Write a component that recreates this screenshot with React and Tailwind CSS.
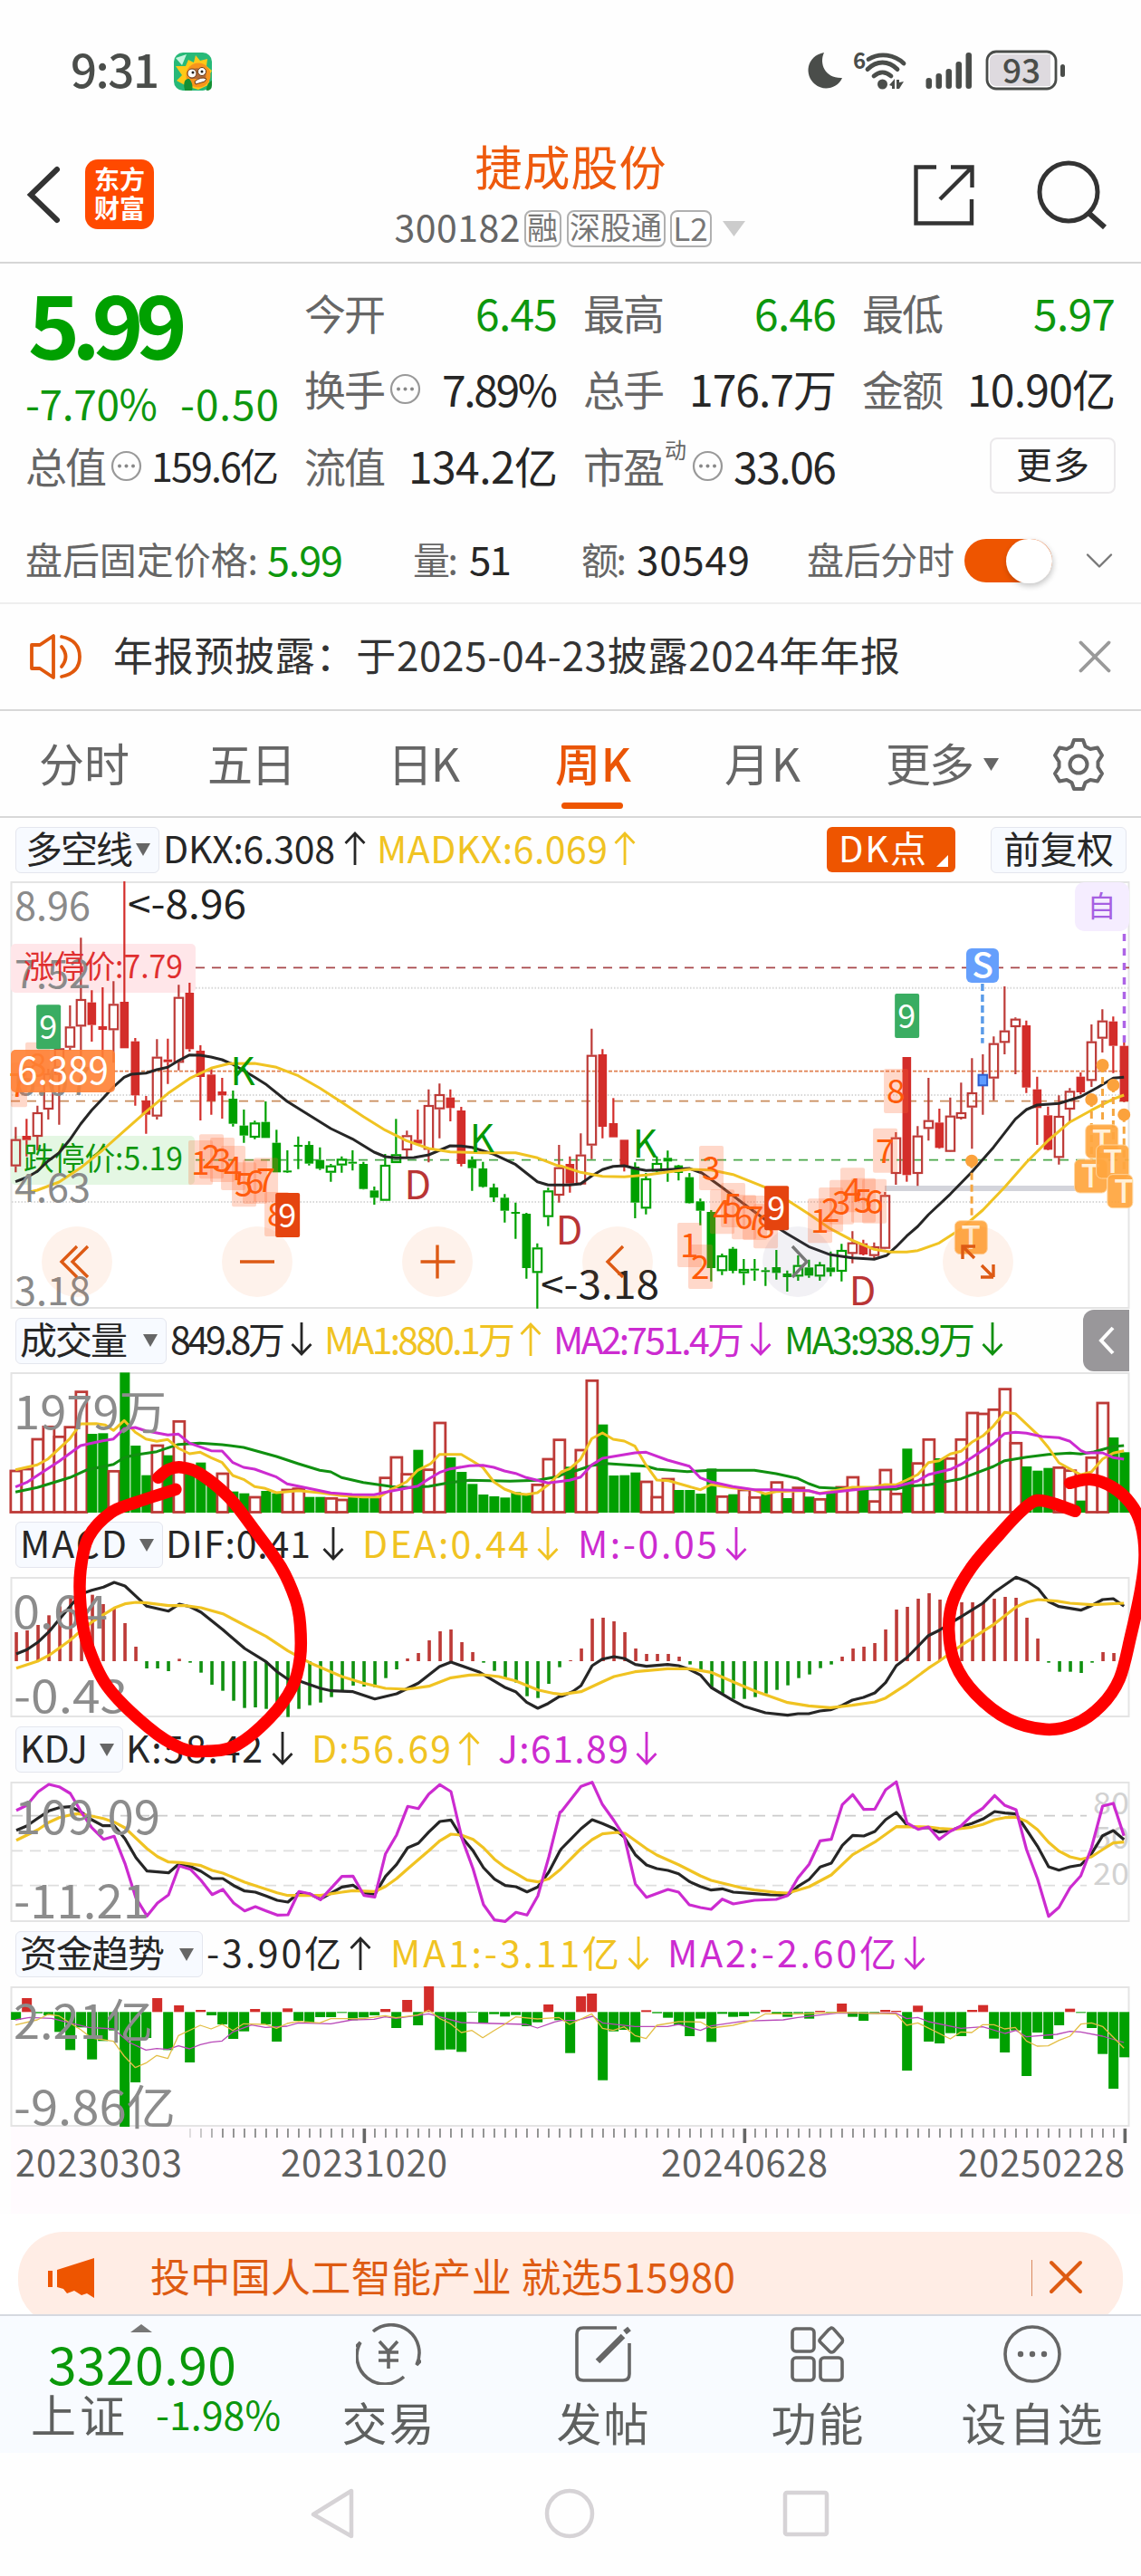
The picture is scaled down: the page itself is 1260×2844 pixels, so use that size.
import React, { useLayoutEffect, useRef } from "react";
import { ChevronDown, X } from "lucide-react";

/* Text set to an exact advance width by adjusting its tracking. */
function Fit({ w, className = "", children }) {
  const ref = useRef(null);
  useLayoutEffect(() => {
    const el = ref.current;
    el.style.letterSpacing = "0px";
    const natural = el.getBoundingClientRect().width;
    const n = Array.from(el.textContent).length;
    el.style.letterSpacing = `${(w - natural) / Math.max(1, n - 1)}px`;
  }, [w]);
  return (
    <span className={`inline-block shrink-0 whitespace-pre pb-[6px] ${className}`} style={{ width: w }}>
      <span ref={ref} className="inline-block">{children}</span>
    </span>
  );
}

/* ---------- chart helpers ---------- */
const RIGHT = 1519;
const px = (x) => x / 2.45;
const col = (i) => (42.5 + 29.4 * i) / 2.45;

function parse(str, dx = 0) {
  return str.trim().split(/\s+/).map((p) => {
    const [x, y] = p.split(",").map(Number);
    return [x + dx, y];
  });
}
function trace(left, right, y0) {
  return [...parse(left), ...parse(right, RIGHT)].map(([x, y]) => `${px(x).toFixed(1)},${(y0 + y / 3).toFixed(1)}`).join(" ");
}
function Line({ l, r, y0, color, width = 3.4 }) {
  return <polyline points={trace(l, r, y0)} fill="none" stroke={color} strokeWidth={width} strokeLinejoin="round" />;
}
function smooth(str, dx, y0) {
  const p = parse(str, dx).map(([x, y]) => [px(x), y0 + y / 3]);
  let d = `M${p[0][0]} ${p[0][1]}`;
  for (let i = 0; i < p.length - 1; i++) {
    const a = p[i - 1] || p[i], b = p[i], c = p[i + 1], e = p[i + 2] || c;
    d += ` C${b[0] + (c[0] - a[0]) / 6} ${b[1] + (c[1] - a[1]) / 6} ${c[0] - (e[0] - b[0]) / 6} ${c[1] - (e[1] - b[1]) / 6} ${c[0]} ${c[1]}`;
  }
  return d;
}
const INK = "#262626", GOLD = "#f0c322", MAG = "#cc2bd0", GRN = "#109010", RED = "#bd3a37";

function T({ x, y, w, size, fill, children, ...rest }) {
  return (
    <text x={x} y={y} fontSize={size} fill={fill} textLength={w} lengthAdjust="spacingAndGlyphs" {...rest}>{children}</text>
  );
}
function Panel({ top, height, children }) {
  return (
    <svg width="1260" height={height} viewBox={`0 ${top} 1260 ${height}`} className="block overflow-visible">
      <rect x="12.5" y={top + 1} width="1234" height={height - 2} fill="#fff" stroke="#e4e4e4" strokeWidth="2" />
      {children}
    </svg>
  );
}

/* ---------- price ---------- */
const CANDLES = `R853,893,983,1003 F826,882,896,950 R782,804,885,930 R660,675,795,828 R590,592,680,845 R450,520,590,600 R226,429,520,640 F400,440,515,570 F390,519,531,640 R370,445,532,640 F39,438,592,592
F558,569,748,782 F750,765,812,875 R562,620,818,828 F560,629,638,710 R382,422,640,665 F375,408,595,603 F582,600,687,831 F660,679,767,812 F690,735,748,825 g732,759,842,851
g795,848,881,905 h832,838,888,893 g768,836,889,889 g862,905,1003,1003 g930,997,1003,1005 g884,912,918,992 g900,912,974,980 g920,962,991,995 h975,980,1004,1034 h950,958,980,1004
g930,968,974,997 g968,975,1058,1060 g1050,1063,1087,1110 h942,978,1097,1097 h826,943,972,972 R865,880,930,958 F795,895,908,912 R728,780,928,970 R709,744,794,890 F728,755,790,834
F786,798,975,983 g950,961,989,1064 g968,990,1051,1054 g1040,1053,1086,1101 g1075,1087,1130,1169 g1103,1134,1140,1223 g1137,1140,1320,1355 h1238,1252,1336,1454 h1054,1063,1151,1181 R912,986,1080,1103
F950,975,1040,1070 R874,944,1043,1045 R527,614,914,959 F595,612,852,890 F757,840,887,887 F895,895,985,1000 g970,984,1103,1155 h1005,1023,1123,1142 h950,972,1000,1003 g931,955,967,1034
g978,980,1005,1030 g1005,1019,1105,1106 g1090,1099,1130,1178 g1128,1134,1320,1364 h1272,1278,1330,1343 g1250,1256,1329,1337 h1290,1323,1337,1376 g1290,1322,1328,1362 g1318,1327,1333,1379 g1260,1317,1336,1358
g1328,1338,1350,1398 h1278,1310,1348,1362 g1292,1318,1345,1352 h1300,1308,1348,1362 g1265,1318,1333,1348 h1240,1260,1332,1364 R1198,1235,1273,1304 F1226,1238,1275,1278 R1235,1248,1280,1290 R1068,1078,1256,1258
R870,887,1008,1044 F621,621,1012,1034 R850,881,1008,1048 R690,830,859,898 F792,838,922,925 R755,815,935,936 R706,804,825,828 R625,738,788,925 B612,680,715,812 R553,575,692,764
R387,533,574,612 R490,494,522,678 F500,516,722,740 F686,728,790,912 F785,814,928,930 R748,816,955,977 R724,733,795,834 F672,686,738,745 R513,569,700,720 R463,500,560,606
F487,503,584,674 F570,584,768,770`.trim().split(/\s+/).map((s) => ({ t: s[0], v: s.slice(1).split(",").map(Number) }));

function Candle({ i, t, v }) {
  const x = col(i), [h, a, b, l] = v.map((n) => 960 + n / 3);
  const up = t === "R" || t === "h";
  const c = t === "g" || t === "h" ? "#00a000" : t === "B" ? "#2f5fd0" : up ? RED : "#d32d2a";
  const wick = t === "B" ? RED : c;
  return (
    <g>
      <path d={`M${x} ${h}V${a}M${x} ${b}V${l}`} stroke={wick} strokeWidth="2.2" />
      {up ? (
        <rect x={x - 4.6} y={a + 1} width="9.4" height={Math.max(1, b - a - 2)} fill="none" stroke={c} strokeWidth="2.2" />
      ) : (
        <rect x={x - 4.8} y={a} width="9.600" height={Math.max(2, b - a)} fill={t === "B" ? "#5e9bff" : c} stroke={t === "B" ? c : "none"} strokeWidth="2" />
      )}
    </g>
  );
}

const COUNTS = [
  ["7", 1, 640], ["8", 2, 572], ["1", 17, 897], ["2", 18, 877], ["3", 19, 888], ["4", 20, 915], ["5", 21, 970], ["6", 22, 960], ["7", 23, 955], ["8", 24, 1068],
  ["1", 62, 1170], ["2", 63, 1242], ["3", 64, 915], ["4", 65, 1060], ["5", 66, 1038], ["6", 67, 1078], ["7", 68, 1080], ["8", 69, 1108],
  ["1", 74, 1090], ["2", 75, 1053], ["3", 76, 1028], ["4", 77, 988], ["5", 78, 1022], ["6", 79, 1025], ["7", 80, 857], ["8", 81, 660],
];
const NINES = [[3, 448, "#3aad62"], [25, 1071, "#e5440f"], [70, 1048, "#e5440f"], [82, 411, "#3aad62"]];
const TRADES = [[1064, 1163], [1418, 845], [1388, 960], [1447, 912], [1477, 1010]];
const DOTS = [[1110, 965, 1160], [1464, 648, 840], [1493, 714, 910], [1434, 762, 960], [1522, 812, 1008]];

function PriceChart() {
  const Y = (y) => 960 + y / 3;
  return (
    <Panel top={973} height={472}>
      {[392, 747, 1101].map((y) => <path key={y} d={`M13 ${Y(y)}H1247`} stroke="#d8d8d8" strokeWidth="2" strokeDasharray="1.5 2" />)}
      <path d={`M216 ${Y(325)}H1247`} stroke="#a8474a" strokeWidth="1.6" strokeDasharray="10 8" />
      <path d={`M126 ${Y(668)}H1247`} stroke="#e08050" strokeWidth="1.6" strokeDasharray="4 2" />
      <path d={`M12 ${Y(767)}H1247`} stroke="#c98d5c" strokeWidth="1.6" strokeDasharray="10 8" />
      <path d={`M216 ${Y(962)}H1247`} stroke="#4aa84a" strokeWidth="1.6" strokeDasharray="10 8" />
      <rect x="977" y="1309" width="212" height="6" fill="#d3d4db" />
      <rect x="12" y="1042" width="204" height="54" rx="5" fill="#ffe6e9" />
      <rect x="12" y="1254" width="203" height="54" rx="5" fill="#e4f7e3" />
      {CANDLES.map((c, i) => <Candle key={i} i={i} {...c} />)}
      <T x={16} y={1091} w={84} size={44} fill="#8a8a8a">7.52</T>
      <T x={16} y={1209} w={84} size={44} fill="#8a8a8a">6.07</T>
      <T x={26} y={1080} w={176} size={35} fill="#e02f2f">涨停价:7.79</T>
      <T x={26} y={1292} w={176} size={35} fill="#0f970f">跌停价:5.19</T>
      <Line y0={960} color={INK}
        l="42,1034 72,1020 101,1000 130,965 160,938 189,895 218,843 248,797 277,760 307,720 336,688 355,678 395,674 424,663 454,655 483,633 513,614 542,615 571,621 601,630 630,645 659,666 689,688 718,710 777,768 836,813 895,858 953,892 1012,936 1042,951 1071,955 1120,954 1160,945 1189,930 1218,915 1248,916 1277,920 1336,943 1395,977 1454,1034 1483,1045 1540,1045"
        r="52,1041 82,1015 111,994 140,983 170,981 199,990 229,997 287,994 346,990 380,1005 434,1052 493,1107 552,1160 610,1206 669,1249 728,1276 787,1286 846,1291 880,1278 905,1250 934,1214 964,1182 993,1143 1052,1075 1110,1002 1169,920 1228,827 1258,795 1287,780 1346,775 1405,752 1450,722 1493,691 1522,688" width={3} />
      <Line y0={960} color={GOLD}
        l="42,1070 72,1070 101,1062 160,1035 218,988 277,930 336,866 395,802 454,742 513,692 571,658 620,643 689,642 748,655 807,683 865,724 924,770 983,818 1042,863 1100,898 1160,924 1218,935 1306,938 1395,938 1454,955 1512,982"
        r="0,982 52,1003 111,1016 170,1018 229,1012 287,1002 346,993 405,995 464,1010 550,1052 610,1094 669,1141 728,1190 787,1228 846,1258 890,1267 934,1267 964,1262 1022,1237 1081,1190 1140,1128 1199,1052 1258,970 1317,897 1376,836 1434,797 1493,760 1522,747" width={3} />
      {COUNTS.map(([n, i, y], k) => {
        const x = k === 0 ? 20 : (42.5 + 29.4 * i) / 2.45;
        return (
          <g key={k}>
            <rect x={k === 0 ? 12 : x - 13.3} y={Y(y)} width={k === 0 ? 18 : 27} height="49" rx="2" fill="#ff6a33" opacity=".26" />
            <text x={x} y={Y(y) + 38} fontSize="37" textAnchor="middle" fill="#ff5a08">{n}</text>
          </g>
        );
      })}
      {NINES.map(([i, y, c]) => (
        <g key={i}>
          <rect x={col(i) - 13.2} y={Y(y)} width="27" height="49" rx="2" fill={c} />
          <text x={col(i)} y={Y(y) + 37.5} fontSize="36" textAnchor="middle" fill="#fff">9</text>
        </g>
      ))}
      {[[657, 715], [1304, 937], [1745, 953]].map(([x, y]) => <text key={x} x={px(x)} y={Y(y)} fontSize="42" textAnchor="middle" fill="#069806">K</text>)}
      {[[1130, 1092], [1540, 1242], [2334, 1443]].map(([x, y]) => <text key={x} x={px(x)} y={Y(y)} fontSize="43" textAnchor="middle" fill="#b93535">D</text>)}
      <T x={16} y={1016} w={84} size={44} fill="#8a8a8a">8.96</T>
      <T x={16} y={1327} w={84} size={44} fill="#8a8a8a">4.63</T>
      <T x={16} y={1441} w={84} size={44} fill="#8a8a8a">3.18</T>
      <T x={141} y={1014} w={131} size={43} fill="#222">&lt;-8.96</T>
      <T x={597} y={1434} w={131} size={43} fill="#222">&lt;-3.18</T>
      <rect x="12" y="1159" width="115" height="47" rx="5" fill="#ff8134" opacity=".9" />
      <T x={19} y={1197} w={101} size={42} fill="#fff">6.389</T>

      <path d={`M${px(RIGHT + 1139)} ${Y(378)}V${Y(575)}`} stroke="#5a9be8" strokeWidth="3.5" strokeDasharray="8 4" />
      <rect x="1067" y="1047" width="36" height="38" rx="6" fill="#659ffc" />
      <text x="1085" y="1080" fontSize="39" fontWeight="500" textAnchor="middle" fill="#fff">S</text>
      <path d={`M1241.5 ${Y(213)}V${Y(575)}`} stroke="#ad64e6" strokeWidth="3.5" strokeDasharray="8 8" />
      <rect x="1187" y="974" width="60" height="54" rx="10" fill="#f5edff" />
      <text x="1216.500" y="1012" fontSize="32" textAnchor="middle" fill="#a65fe2">自</text>
      {DOTS.map(([x, y, e]) => (
        <g key={x} stroke="#f5a640" fill="#fba23c">
          <path d={`M${px(RIGHT + x)} ${Y(y)}V${Y(e)}`} strokeWidth="3" strokeDasharray="8 5" />
          <circle cx={px(RIGHT + x)} cy={Y(y)} r="7" stroke="none" />
        </g>
      ))}
      {TRADES.map(([x, y], i) => (
        <g key={x}>
          <rect x={px(RIGHT + x)} y={Y(y)} width={i === 4 ? 28 : 36} height="37" rx="6" fill="#ffa63f" stroke="#ffd7a0" strokeWidth="1" opacity=".93" />
          <text x={px(RIGHT + x) + 18} y={Y(y) + 31} fontSize="35" fontWeight="500" textAnchor="middle" fill="#fff0d8">T</text>
        </g>
      ))}
      {[85, 284, 483, 682, 881, 1080].map((x, i) => <circle key={x} cx={x} cy="1393" r="39" fill={i === 4 ? "#6b5b8c" : "#f2661c"} opacity=".085" />)}
      <g fill="none" stroke="#dd5a14" strokeWidth="3.4">
        <path d="M85 1376L68 1393L85 1410M97 1376L80 1393L97 1410M265 1393H303M464.500 1393H502.500M483 1374.500V1411.500M688 1376L671 1393L688 1410" />
        <path d="M875 1376L891 1393L875 1410" stroke="#777" />
        <path d="M1063 1390V1376H1077M1063 1376L1076 1389M1097 1410H1083M1097 1410V1396M1097 1410L1084 1397" />
      </g>
    </Panel>
  );
}

/* ---------- volume ---------- */
const VOL = `R549 R543 R444 R403 R436 R404 R287 G429 G427 R550 G226 G468 G566 R465 G500 R385 G560 G524 G598 R558 G620 G626 R636 G618 G626 R612 R608 G638 G638 R640 R645 G638 G640 G636 R572 R504 R560 G482 R545 R390 G507 G555 G595 G630 G636 G640 G622 G630 R595 R510 R446 G538 R480 R250 G398 G567 G566 G557 R585 R636 R576 G615 G615 G627 G544 R634 G629 R612 R637 G628 R587 G642 R605 G637 R643 G618 R603 R570 G610 R650 R546 R625 G478 R524 R445 G510 R508 R445 R357 R360 R346 R278 R457 G537 G551 G542 R538 R548 G650 R505 R324 G441 G490`.split(" ");

function VolumeChart() {
  return (
    <Panel top={1515} height={155}>
      {VOL.map((s, i) => {
        const x = col(i), y = 1440 + Number(s.slice(1)) / 3;
        return s[0] === "R" ? (
          <rect key={i} x={x - 5.5} y={y + 1} width="12" height={1668.5 - y} fill="#fff" stroke={RED} strokeWidth="2.800" />
        ) : (
          <rect key={i} x={x - 5} y={y} width="11" height={1670 - y} fill="#00a000" />
        );
      })}
      <Line y0={1440} color={GRN} width={3}
        l="42,622 101,607 189,574 236,548 307,530 336,508 366,499 424,488 483,464 540,460 601,465 659,474 748,504 807,528 865,550 895,555 924,574 983,590 1060,604 1110,607 1160,603 1218,590 1270,583 1380,586 1454,583 1512,570"
        r="0,565 22,558 82,534 120,527 229,536 258,546 340,554 405,550 522,550 581,561 640,577 669,594 699,607 787,612 905,612 934,603 993,598 1081,578 1169,537 1199,518 1258,506 1317,497 1376,493 1405,496 1440,489 1493,471 1522,468" />
      <Line y0={1440} color={GOLD} width={3}
        l="42,548 101,532 130,512 189,445 218,396 260,395 285,400 307,418 336,385 366,424 395,446 424,454 454,448 483,477 513,495 542,490 571,508 601,524 630,567 659,580 689,604 718,610 748,624 807,617 865,624 924,634 983,638 1026,638 1060,612 1100,588 1130,550 1165,528 1189,497 1248,497 1277,518 1306,540 1336,588 1365,612 1395,626 1424,630 1454,624 1483,598"
        r="0,555 22,545 52,513 82,445 111,426 140,447 170,453 199,470 229,533 258,582 290,584 346,604 376,614 405,597 464,608 522,615 552,628 581,620 640,618 669,618 699,626 728,620 787,606 846,606 875,597 905,598 934,582 964,564 993,524 1022,518 1052,496 1081,487 1110,457 1140,436 1169,403 1199,358 1228,362 1287,430 1317,474 1346,525 1376,545 1405,565 1434,555 1464,512 1493,493 1522,485" />
      <Line y0={1440} color={MAG} width={3}
        l="42,605 72,590 160,520 218,468 277,452 307,446 336,412 366,408 395,419 454,433 483,430 513,460 571,485 601,486 630,524 659,540 689,546 748,572 777,595 836,610 895,625 953,630 1012,631 1060,618 1130,602 1160,578 1189,557 1218,545 1270,535 1306,533 1336,540 1365,552 1395,560 1424,574 1483,592"
        r="22,583 52,572 82,532 111,510 199,492 229,490 287,516 346,536 376,575 405,588 464,604 522,614 581,614 669,617 699,627 787,615 860,607 905,604 964,585 993,564 1052,547 1081,530 1110,508 1169,460 1199,428 1228,424 1258,427 1300,438 1346,442 1376,454 1405,484 1420,492 1464,492 1493,508 1522,513" />
      <T x={15} y={1578} w={169} size={51} fill="#8c8c8c">1979万</T>
    </Panel>
  );
}

/* ---------- MACD ---------- */
const MACD = [1086, 1080, 1062, 1030, 1000, 972, 960, 962, 993, 1005, 1056, 1134, 1206, 1206, 1215, 1174, 1187, 1220, 1260, 1280, 1313, 1337, 1335, 1340, 1345, 1367, 1340, 1328, 1319, 1301, 1280, 1263, 1266, 1268, 1238, 1209, 1173, 1155, 1113, 1083, 1077, 1119, 1152, 1187, 1214, 1238, 1253, 1298, 1304, 1257, 1202, 1179, 1140, 1041, 1038, 1050, 1086, 1140, 1158, 1158, 1158, 1167, 1193, 1217, 1268, 1289, 1307, 1307, 1301, 1289, 1277, 1262, 1238, 1226, 1205, 1193, 1167, 1140, 1134, 1122, 1077, 1011, 1002, 975, 957, 978, 985, 987, 987, 987, 975, 969, 972, 1038, 1107, 1187, 1217, 1217, 1221, 1187, 1152, 1155, 1194];

function MacdChart() {
  return (
    <Panel top={1741} height={155}>
      {MACD.map((v, i) => {
        const a = 1440 + Math.min(v, 1182) / 3, b = 1440 + Math.max(v, 1182) / 3;
        return <rect key={i} x={col(i) - 1.1} y={a} width="3.600" height={b - a} fill={v < 1182 ? RED : GRN} />;
      })}
      <Line y0={1440} color={INK} width={3.2}
        l="44,1158 73,1144 102,1120 132,1085 190,1000 218,960 248,947 280,937 309,921 338,933 368,967 397,1000 456,1016 485,993 515,1002 544,1020 603,1078 662,1140 720,1184 750,1217 779,1242 809,1247 867,1272 897,1280 955,1283 1014,1307 1073,1290 1132,1255 1189,1200 1220,1185 1295,1217 1336,1247 1365,1268 1395,1283 1425,1318 1455,1338 1483,1322 1512,1300"
        r="0,1298 30,1283 53,1263 83,1197 111,1175 142,1167 170,1173 200,1193 230,1199 287,1193 317,1197 346,1209 376,1228 405,1269 464,1312 493,1331 552,1353 612,1361 640,1356 669,1356 699,1347 728,1343 760,1328 787,1311 817,1302 848,1287 877,1253 906,1197 935,1170 993,1097 1022,1080 1060,1050 1081,1035 1140,990 1170,955 1230,904 1260,918 1290,942 1317,984 1346,1001 1405,1013 1434,998 1464,978 1493,975 1522,1000" />
      <Line y0={1440} color={GOLD} width={3.2}
        l="44,1205 102,1182 132,1163 190,1112 218,1082 248,1053 280,1028 309,1006 338,992 368,987 397,989 456,998 500,998 544,1005 603,1025 720,1100 779,1148 838,1187 925,1233 983,1255 1043,1272 1100,1275 1160,1265 1220,1237 1270,1228 1306,1227 1350,1233 1395,1247 1455,1277 1500,1289"
        r="0,1292 53,1283 111,1250 142,1233 199,1217 287,1207 346,1207 405,1219 464,1250 522,1280 612,1319 669,1330 728,1336 787,1328 848,1317 877,1304 935,1258 993,1205 1022,1182 1081,1130 1170,1060 1230,1003 1260,986 1290,978 1340,983 1376,990 1434,995 1522,990" />
      <T x={14} y={1798} w={105} size={50} fill="#8c8c8c">0.64</T>
      <T x={15} y={1891} w={126} size={50} fill="#8c8c8c">-0.43</T>
    </Panel>
  );
}

/* ---------- KDJ ---------- */
function KdjChart() {
  return (
    <Panel top={1967} height={155}>
      {[254, 370, 485].map((y, i) => <path key={y} d={`M13 ${1920 + y / 3}H1200`} stroke={i ? "#dedede" : "#cccccc"} strokeWidth="1.600" strokeDasharray="12 8" />)}
      {[["80", 2002.5], ["50", 2041], ["20", 2081]].map(([n, y]) => <T key={n} x={1207} y={y} w={40} size={33} fill="#d2d2d2">{n}</T>)}
      <Line y0={1920} color={INK} width={3.2}
        l="44,302 72,288 103,262 132,238 160,227 190,224 218,240 248,267 278,287 309,287 338,330 368,393 398,437 456,443 483,415 515,422 544,438 574,462 603,462 632,485 662,503 691,507 720,520 750,534 779,540 809,508 838,513 867,530 925,490 955,484 985,510 1014,514 1043,455 1073,415 1103,360 1132,345 1160,308 1190,273 1220,268 1248,323 1280,370 1308,426 1338,464 1367,485 1396,489 1426,506 1455,490 1485,440 1515,370"
        r="0,363 53,297 83,267 111,280 142,296 170,325 200,383 230,417 258,429 288,435 317,446 346,472 376,488 405,500 435,496 465,507 522,512 565,516 612,517 640,488 670,465 700,424 730,411 760,352 788,319 818,321 848,306 877,267 906,243 935,285 965,295 993,293 1022,308 1052,303 1081,290 1110,280 1140,265 1172,240 1200,245 1230,248 1258,300 1288,355 1318,423 1346,434 1376,423 1405,417 1434,380 1464,320 1493,303 1522,333" />
      <Line y0={1920} color={GOLD} width={3.2}
        l="44,335 103,300 132,276 160,260 190,251 210,247 248,255 280,263 309,275 338,294 398,363 426,389 456,407 490,409 544,419 574,435 603,444 662,474 750,509 779,518 867,518 925,507 955,502 1014,505 1043,488 1073,462 1103,430 1160,370 1190,337 1220,315 1248,318 1280,332 1308,360 1338,398 1367,425 1396,445 1426,467 1455,473 1485,463 1515,433"
        r="0,428 53,363 83,333 111,314 150,309 172,312 230,363 258,384 317,416 376,453 405,468 493,494 522,500 581,508 612,510 640,500 670,489 730,450 788,383 848,341 906,290 993,291 1022,296 1060,299 1110,292 1140,283 1172,267 1200,260 1230,259 1258,272 1288,300 1318,342 1346,371 1376,390 1405,398 1434,390 1464,366 1493,344 1522,341" />
      <Line y0={1920} color={MAG} width={3.2}
        l="44,236 72,220 103,175 132,150 160,158 190,180 218,238 248,293 280,332 309,322 338,412 368,527 398,586 426,543 456,516 485,420 515,431 544,468 574,515 603,498 632,543 662,569 691,555 720,569 750,583 779,582 809,505 838,512 867,532 925,455 955,454 985,518 1014,523 1043,380 1073,317 1103,223 1132,230 1160,182 1190,151 1220,174 1250,330 1280,430 1308,548 1338,599 1367,604 1396,574 1426,583 1455,520 1485,390 1515,242"
        r="0,240 53,157 83,143 111,217 142,270 170,323 200,480 230,524 288,498 317,507 346,549 376,558 405,564 435,530 465,546 522,534 581,531 612,518 640,460 670,415 700,337 730,332 760,217 788,184 818,233 848,232 877,168 906,142 935,278 965,299 993,291 1022,332 1052,305 1081,288 1110,253 1140,229 1172,187 1200,220 1230,234 1258,365 1288,463 1318,587 1346,557 1376,493 1405,453 1434,360 1464,222 1493,213 1522,320" />
      <T x={16} y={2025} w={161} size={52} fill="#8c8c8c">109.09</T>
      <T x={15} y={2118} w={150} size={52} fill="#8c8c8c">-11.21</T>
    </Panel>
  );
}

/* ---------- capital flow ---------- */
const FLOW = [930, 858, 908, 915, 970, 1030, 955, 1061, 1000, 965, 1284, 1137, 990, 858, 1030, 882, 1071, 897, 915, 945, 993, 968, 894, 945, 1002, 892, 933, 940, 921, 921, 907, 931, 922, 915, 894, 957, 864, 948, 819, 1030, 1028, 1036, 906, 939, 911, 919, 914, 951, 938, 879, 931, 1040, 852, 843, 1130, 968, 963, 1004, 898, 908, 923, 948, 984, 926, 1003, 910, 920, 918, 908, 897, 910, 920, 908, 926, 900, 906, 876, 920, 933, 910, 897, 900, 1098, 883, 1002, 1008, 974, 984, 897, 881, 992, 1038, 965, 1116, 972, 993, 948, 893, 907, 957, 1043, 1158, 1054];

function FlowChart() {
  return (
    <Panel top={2193} height={155}>
      {FLOW.map((v, i) => {
        const a = 1920 + Math.min(v, 904) / 3, b = 1920 + Math.max(v, 904) / 3;
        return <rect key={i} x={col(i) - 5.2} y={a} width="11" height={b - a} fill={v < 904 ? "#d32d2a" : "#00a000"} />;
      })}
      <Line y0={1920} color="#b849b8" width={1.3}
        l="42,930 80,922 140,925 190,940 240,955 307,960 350,1005 395,1030 424,1025 454,1028 483,1016 513,1026 542,1012 571,1004 601,1000 630,970 680,947 718,955 777,951 807,940 895,943 953,930 1012,928 1042,920 1071,925 1160,910 1189,920 1248,939 1336,942 1424,945 1454,957 1500,937"
        r="0,932 40,932 85,918 111,940 199,952 287,952 317,945 376,965 405,950 493,934 600,930 640,922 750,907 905,908 934,926 964,922 993,936 1081,958 1140,953 1200,975 1230,965 1258,986 1340,978 1376,968 1405,970 1464,984 1522,1005" />
      <Line y0={1920} color="#e3be45" width={1.3}
        l="42,947 101,930 130,912 160,917 189,940 218,962 248,990 307,1001 336,1050 366,1088 395,1073 424,1048 454,1058 483,982 542,948 571,960 601,945 630,965 659,943 718,945 748,958 777,942 807,935 865,940 895,926 983,926 1042,916 1071,923 1130,914 1160,898 1189,925 1218,942 1248,972 1277,965 1306,989 1336,966 1365,945 1395,920 1454,927 1512,922"
        r="22,945 82,910 111,958 140,965 170,953 199,982 229,992 258,948 317,936 376,937 405,957 464,948 522,930 552,910 640,911 750,905 905,911 934,948 964,940 1052,993 1081,970 1110,972 1140,946 1170,946 1199,960 1228,955 1258,1000 1287,1017 1317,1016 1346,998 1376,984 1405,944 1434,940 1464,952 1522,1024" />
      <T x={15} y={2251} w={154} size={52} fill="#8c8c8c">2.21亿</T>
      <T x={15} y={2346} w={179} size={52} fill="#8c8c8c">-9.86亿</T>
    </Panel>
  );
}

function Axis() {
  return (
    <div className="ml-3 h-[96px] w-[1236px] bg-[#fffbfe]">
      <svg width="1236" height="18" className="block">
        {Array.from({ length: 87 }, (_, k) => k + 16).map((i) => {
          const major = i === 32 || i === 67 || i === 102;
          return <rect key={i} x={col(i) - 12.3 + (major ? -0.5 : 0)} y="2" width={major ? 3.6 : 1.8} height={major ? 16 : 10} fill={major ? "#666" : "#8a8a8a"} opacity={i < 19 ? 0.3 + (i - 16) * 0.2 : 1} />;
        })}
      </svg>
      <div className="flex h-[46px] items-center text-[40px] leading-none text-[#5f6160]">
        <Fit w={184} className="ml-[5px]">20230303</Fit>
        <Fit w={184} className="ml-[109px]">20231020</Fit>
        <Fit w={184} className="ml-[236px]">20240628</Fit>
        <Fit w={184} className="ml-[144px]">20250228</Fit>
      </div>
    </div>
  );
}

/* ---------- indicator headers ---------- */
function Arrow({ up, className }) {
  return (
    <svg width="24" height="40" viewBox="0 0 24 40" className={`shrink-0 ${className}`} fill="none" stroke="currentColor" strokeWidth="2.800">
      <path d={up ? "M12 37V2M1.500 13L12 2L22.500 13" : "M12 0V35M1.500 24L12 35L22.500 24"} />
    </svg>
  );
}
function Chip({ w, label, lw, pad = "pl-[4px]" }) {
  return (
    <div className={`ml-[17px] flex h-[51px] shrink-0 items-center justify-between rounded-md border border-[#e4e6ee] bg-[#f7faff] pr-[9px] ${pad}`} style={{ width: w }}>
      <Fit w={lw} className="text-[#262626]">{label}</Fit>
      <svg width="16" height="14" viewBox="0 0 16 14"><path d="M0 0H16L8 14Z" fill="#666" /></svg>
    </div>
  );
}
const HEAD = "flex h-[71px] w-[1260px] items-center text-[41px] leading-none whitespace-nowrap";

function More() {
  return (
    <svg width="35" height="35" viewBox="0 0 35 35" className="shrink-0">
      <circle cx="17.500" cy="17.500" r="15.500" fill="none" stroke="#999" strokeWidth="2.200" />
      <circle cx="10" cy="17.500" r="2" fill="#888" /><circle cx="17.500" cy="17.500" r="2" fill="#888" /><circle cx="25" cy="17.500" r="2" fill="#888" />
    </svg>
  );
}
function Stat({ label, lw = 90, value, vw, green, more, sup, small }) {
  return (
    <div className="flex h-full items-center justify-between">
      <div className="flex items-center">
        <Fit w={lw} className="text-[46px] text-[#666]">{label}</Fit>
        {sup && <span className="mb-[40px] w-[26px] text-[24px] text-[#666]">{sup}</span>}
        {more && <span className="mt-[-3px] ml-[4px] flex"><More /></span>}
      </div>
      <Fit w={vw} className={`${small ? "text-[43px]" : "text-[48px]"} ${green ? "text-[#0d970d]" : "text-[#262626]"}`}>{value}</Fit>
    </div>
  );
}

function StatusBar() {
  return (
    <div className="flex h-[116px] items-center pt-[42px] pb-0 text-[#4a4d4a]">
      <div className="mb-[1px] ml-[78px] flex h-[74px] w-full items-center">
        <Fit w={98} className="mt-[-1px] text-[51px] leading-none font-medium">9:31</Fit>
        <svg width="42" height="42" viewBox="0 0 42 42" className="ml-[16px]">
          <rect width="42" height="42" rx="10" fill="#27b978" />
          <path d="M2 6L14 2L9 14Z" fill="#c6f5df" />
          <path d="M24 3L29 9L37 7L36 15L42 20L38 27L40 35L27 41L14 37L3 31L9 25L2 15L13 15L16 8L22 11Z" fill="#ffc918" />
          <circle cx="27" cy="25" r="13.500" fill="#f7941d" />
          <path d="M12 41C10 34 12 28 17 29C21 34 21 38 20 42H12Z" fill="#149033" />
          <path d="M36 42C36 35 39 32 42 31V36Q42 42 36 42Z" fill="#149033" />
          <path d="M17 19Q27 15 36 20L35 29H18Z" fill="#b0693a" />
          <circle cx="20" cy="23" r="5" fill="#fff" stroke="#6b3a12" /><circle cx="31" cy="21" r="4.500" fill="#fff" stroke="#6b3a12" />
          <circle cx="21" cy="22" r="1.500" fill="#222" /><circle cx="31" cy="21" r="1.500" fill="#222" />
          <path d="M23 32Q30 26 36 29L34 32L24 35Z" fill="#fff" stroke="#6b3a12" />
        </svg>
        <svg width="290" height="48" viewBox="888 54 290 48" className="mt-[-1px] ml-[654px] overflow-visible" fill="#4a4d4a">
          <path d="M910 58C904 71 912 87 930 86C925 98 909 101 900 93C888 83 890 62 910 58Z" />
          <text x="942" y="75.500" fontSize="24" fontWeight="700">6</text>
          <g fill="none" stroke="#4a4d4a" strokeWidth="4.800" strokeLinecap="round">
            <path d="M959 65.500C972 57.500 988 60.500 998 70M958 76.500C968 66.500 981 66.500 991 76.500M965 84C971 78.500 978 78.500 984 84" />
          </g>
          <circle cx="974.500" cy="93" r="5.500" />
          <path d="M982 94L988 87V98H985V95ZM990 88H993V91L998 90L993 98H990Z" />
          {[[1022.5, 86], [1033.5, 81], [1044.5, 76], [1055.5, 68], [1066.5, 58]].map(([x, y]) => <rect key={x} x={x} y={y} width="6.500" height={98 - y} rx="3" />)}
          <rect x="1090" y="57" width="76" height="41" rx="10" fill="#fff" stroke="#4a4d4a" strokeWidth="2.800" />
          <path d="M1100 60H1160V95H1100Q1093 95 1093 88V67Q1093 60 1100 60Z" fill="#dedadf" />
          <text x="1128" y="92" fontSize="37" fontWeight="500" textAnchor="middle">93</text>
          <rect x="1171" y="71" width="5" height="14" rx="2.500" />
        </svg>
      </div>
    </div>
  );
}

function Header() {
  return (
    <header className="flex h-[175px] border-b-2 border-[#d6d6d6] text-[#333]">
      <div className="flex w-[420px] items-start pl-[29px]">
        <svg width="40" height="66" viewBox="0 0 40 66" className="mt-[66px]" fill="none" stroke="#333" strokeWidth="6" strokeLinecap="round"><path d="M34 5L5 33L34 61" /></svg>
        <div className="mt-[60px] ml-[25px] flex h-[77px] w-[76px] flex-col items-center justify-center rounded-[14px] bg-[#ff4a00] pb-[3px] text-[28px] leading-[32px] font-bold text-white">
          <span>东方</span><span>财富</span>
        </div>
      </div>
      <div className="flex w-[420px] flex-col items-center">
        <Fit w={211} className="mt-[37px] text-[52px] leading-[60px] text-[#ee5a0e]">捷成股份</Fit>
        <div className="mt-[12px] flex h-[42px] items-center text-[36px] leading-none text-[#777]">
          <Fit w={139} className="text-[41px] text-[#666]">300182</Fit>
          <span className="ml-[4px] flex h-[41px] w-[41px] items-center justify-center rounded-lg border-2 border-[#b0b0b0] pb-[4px] text-[34px]">融</span>
          <span className="ml-[6px] flex h-[41px] w-[109px] items-center justify-center rounded-lg border-2 border-[#b0b0b0] pb-[4px] text-[34px]">深股通</span>
          <span className="ml-[5px] flex h-[41px] w-[46px] items-center justify-center rounded-lg border-2 border-[#b0b0b0] pb-[4px] text-[35px]">L2</span>
          <svg width="25" height="17" viewBox="0 0 25 17" className="mr-[2px] ml-[12px]"><path d="M0 0H25L12.500 17Z" fill="#ccc" /></svg>
        </div>
      </div>
      <div className="flex w-[420px] items-start">
        <svg width="70" height="72" viewBox="0 0 70 72" className="mt-[63px] ml-[167px]" fill="none" stroke="#333" strokeWidth="4.400">
          <path d="M27 5.500H4.500V67.500H66V41M43 5.500H66.500V28M66 6L31 41" />
        </svg>
        <svg width="84" height="84" viewBox="0 0 84 84" className="mt-[56px] ml-[65px]" fill="none" stroke="#333" strokeWidth="5">
          <circle cx="38" cy="40" r="32" /><path d="M60 63L78 79" strokeWidth="6" />
        </svg>
      </div>
    </header>
  );
}

function Quote() {
  return (
    <section className="flex h-[282px] pt-[14px] pl-[28px] leading-none">
      <div className="w-[280px]">
        <div className="flex h-[114px] items-center"><Fit w={176} className="mt-[-9px] ml-[3px] text-[97px] font-bold text-[#00a000]">5.99</Fit></div>
        <div className="flex h-[56px] items-center justify-between text-[46px] text-[#0d970d]">
          <Fit w={146}>-7.70%</Fit><Fit w={109}>-0.50</Fit>
        </div>
        <div className="h-[82px]"><Stat label="总值" more small value="159.6亿" vw={141} /></div>
      </div>
      <div className="ml-[28px] grid h-[253px] w-[896px] grid-cols-[280px_280px_280px] grid-rows-3 gap-x-[28px]">
        <Stat label="今开" value="6.45" vw={91} green />
        <Stat label="最高" value="6.46" vw={91} green />
        <Stat label="最低" value="5.97" vw={91} green />
        <Stat label="换手" more value="7.89%" vw={128} />
        <Stat label="总手" value="176.7万" vw={163} />
        <Stat label="金额" value="10.90亿" vw={164} />
        <Stat label="流值" value="134.2亿" vw={165} />
        <Stat label="市盈" sup="动" more value="33.06" vw={114} />
        <div className="flex h-full items-center justify-end">
          <div className="mt-[-3px] flex h-[62px] w-[139px] items-center justify-center rounded-lg border-2 border-[#ebe9eb]"><Fit w={81} className="text-[40px] text-[#262626]">更多</Fit></div>
        </div>
      </div>
    </section>
  );
}

function AfterHours() {
  return (
    <section className="flex h-[94px] items-center border-b-2 border-[#eeeeee] text-[41px] leading-none text-[#666]">
      <Fit w={257} className="ml-[28px]">盘后固定价格:</Fit>
      <Fit w={84} className="ml-[10px] text-[45px] text-[#0d970d]">5.99</Fit>
      <Fit w={50} className="ml-[77px]">量:</Fit>
      <Fit w={47} className="ml-[12px] text-[44px] text-[#262626]">51</Fit>
      <Fit w={50} className="ml-[77px]">额:</Fit>
      <Fit w={125} className="ml-[11px] text-[44px] text-[#262626]">30549</Fit>
      <Fit w={163} className="ml-[63px]">盘后分时</Fit>
      <div className="ml-[11px] flex h-[48px] w-[97px] items-center justify-end rounded-full bg-[#ee5500]">
        <div className="h-[49px] w-[51px] rounded-full bg-white shadow-[1px_3px_6px_rgba(0,0,0,0.22)]" />
      </div>
      <ChevronDown size={52} strokeWidth={1.1} className="ml-[26px] text-[#777]" />
    </section>
  );
}

function Notice() {
  return (
    <section className="flex h-[118px] items-center border-b-2 border-[#d8d8d8] leading-none">
      <svg width="62" height="54" viewBox="0 0 62 54" className="ml-[31px]" fill="none" stroke="#e0580c" strokeWidth="3.800" strokeLinejoin="round">
        <path d="M4 14H13L28 4V50L13 40H4Z" /><path d="M37 16Q46 27 37 38M37 5Q57 9 57 27Q57 45 37 49" strokeLinecap="round" />
      </svg>
      <Fit w={869} className="ml-[32px] text-[44px] text-[#333]">年报预披露：于2025-04-23披露2024年年报</Fit>
      <X size={62} strokeWidth={1.5} className="ml-[184px] text-[#999]" />
    </section>
  );
}

function Tabs() {
  const tabs = [["分时", 100, "ml-[43px]"], ["五日", 98, "ml-[86px]"], ["日K", 80, "ml-[101px]"], ["周K", 84, "ml-[105px]"], ["月K", 84, "ml-[103px]"], ["更多", 98, "ml-[94px]"]];
  return (
    <nav className="h-[118px] border-b-2 border-[#d8d8d8]">
      <div className="flex h-[101px] items-center pt-[16px] text-[50px] leading-none text-[#666]">
        {tabs.map(([t, w, m], i) => (
          <Fit key={t} w={w} className={`${m} ${i === 3 ? "font-medium text-[#ea5506]" : ""}`}>{t}</Fit>
        ))}
        <svg width="17" height="14" viewBox="0 0 17 14" className="ml-[10px]"><path d="M0 0H17L8.500 14Z" fill="#666" /></svg>
        <svg width="62" height="62" viewBox="-31 -31 62 62" className="ml-[57px]" fill="none" stroke="#666" strokeWidth="4" strokeLinejoin="round">
          <path d="M-5 -27H5L7.500 -20L13 -17L21 -18.500L26 -10L21.500 -3V3L26 10L21 18.500L13 17L7.500 20L5 27H-5L-7.500 20L-13 17L-21 18.500L-26 10L-21.500 3V-3L-26 -10L-21 -18.500L-13 -17L-7.500 -20Z" />
          <circle r="9.500" />
        </svg>
      </div>
      <div className="ml-[620px] h-[7px] w-[68px] rounded-full bg-[#ee5500]" />
    </nav>
  );
}

function Charts() {
  return (
    <section className="relative">
      <div className="flex h-[70px] items-center text-[41px] leading-none">
        <Chip w={159} lw={119} pad="pl-[10px]" label="多空线" />
        <Fit w={190} className="ml-[4px] text-[#262626]">DKX:6.308</Fit><Arrow up className="ml-[10px] text-[#262626]" />
        <Fit w={255} className="ml-[12px] text-[#f0c322]">MADKX:6.069</Fit><Arrow up className="ml-[7px] text-[#f0c322]" />
        <div className="ml-[211px] flex h-[50px] w-[142px] items-center rounded-md bg-[#ee5500] pl-[13px]">
          <Fit w={97} className="text-[40px] text-white">DK点</Fit>
          <svg width="13" height="13" className="mt-[24px] ml-[11px]"><path d="M13 0V13H0Z" fill="#fff" /></svg>
        </div>
        <div className="ml-[39px] flex h-[51px] w-[150px] items-center justify-center rounded-md border border-[#e4e6ee] bg-[#f7faff]"><Fit w={122} className="text-[#262626]">前复权</Fit></div>
      </div>
      <PriceChart />
      <div className="flex h-[70px] items-center text-[41px] leading-none">
        <Chip w={167} lw={119} label="成交量" />
        <Fit w={127} className="ml-[4px] text-[#262626]">849.8万</Fit><Arrow className="ml-[6px] text-[#262626]" />
        <Fit w={211} className="ml-[13px] text-[#f0c322]">MA1:880.1万</Fit><Arrow up className="ml-[5px] text-[#f0c322]" />
        <Fit w={211} className="ml-[13px] text-[#cc2bd0]">MA2:751.4万</Fit><Arrow className="ml-[6px] text-[#cc2bd0]" />
        <Fit w={211} className="ml-[14px] text-[#109010]">MA3:938.9万</Fit><Arrow className="ml-[7px] text-[#109010]" />
        <div className="ml-[88px] flex h-[68px] w-[51px] items-center justify-center rounded-l-xl bg-[#99979a]">
          <svg width="20" height="34" viewBox="0 0 20 34" fill="none" stroke="#fff" strokeWidth="4"><path d="M17 3L4 17L17 31" /></svg>
        </div>
      </div>
      <VolumeChart />
      <div className={HEAD}>
        <Chip w={163} lw={118} label="MACD" />
        <Fit w={160} className="ml-[3px] text-[#262626]">DIF:0.41</Fit><Arrow className="ml-[13px] text-[#262626]" />
        <Fit w={184} className="ml-[20px] text-[#f0c322]">DEA:0.44</Fit><Arrow className="ml-[9px] text-[#f0c322]" />
        <Fit w={154} className="ml-[21px] text-[#cc2bd0]">M:-0.05</Fit><Arrow className="ml-[9px] text-[#cc2bd0]" />
      </div>
      <MacdChart />
      <div className={HEAD}>
        <Chip w={119} lw={75} label="KDJ" />
        <Fit w={151} className="ml-[3px] text-[#262626]">K:58.42</Fit><Arrow className="ml-[10px] text-[#262626]" />
        <Fit w={154} className="ml-[20px] text-[#f0c322]">D:56.69</Fit><Arrow up className="ml-[8px] text-[#f0c322]" />
        <Fit w={144} className="ml-[20px] text-[#cc2bd0]">J:61.89</Fit><Arrow className="ml-[8px] text-[#cc2bd0]" />
      </div>
      <KdjChart />
      <div className={HEAD}>
        <Chip w={207} lw={160} label="资金趋势" />
        <Fit w={149} className="ml-[4px] text-[#262626]">-3.90亿</Fit><Arrow up className="ml-[9px] text-[#262626]" />
        <Fit w={253} className="ml-[21px] text-[#f0c322]">MA1:-3.11亿</Fit><Arrow className="ml-[9px] text-[#f0c322]" />
        <Fit w={253} className="ml-[20px] text-[#cc2bd0]">MA2:-2.60亿</Fit><Arrow className="ml-[8px] text-[#cc2bd0]" />
      </div>
      <FlowChart />
      <Axis />
      {/* hand-drawn marks over the MACD pane */}
      <svg width="1260" height="400" viewBox="0 1580 1260 400" className="pointer-events-none absolute top-[677px] left-0" fill="none" stroke="#ff0000" strokeWidth="13.500" strokeLinecap="round">
        <path d={smooth("428,574 455,548 490,540 540,560 620,640 690,750 760,870 800,980 812,1060 812,1170 790,1270 730,1370 640,1460 560,1480 490,1470 400,1400 290,1265 235,1120 218,1000 218,880 240,770 300,690 370,655 475,613", 0, 1440)} />
        <path d={smooth("1376,592 1430,580 1490,605 1540,660 1568,730 1578,830 1568,940 1540,1100 1510,1240 1460,1330 1390,1390 1310,1408 1210,1375 1120,1290 1065,1190 1048,1080 1060,980 1110,870 1190,755 1240,690 1275,655 1300,650 1340,663 1390,685", RIGHT, 1440)} />
      </svg>
    </section>
  );
}

function AdBar() {
  return (
    <section className="flex h-[111px] items-start overflow-hidden bg-white pt-[20px]">
      <div className="ml-[20px] flex h-[104px] w-[1220px] shrink-0 items-center rounded-[50px] bg-[#ffede5] text-[#de5b12]">
        <svg width="54" height="48" viewBox="0 0 54 48" className="mt-[-2px] ml-[32px]" fill="#ee5500">
          <path d="M1 16H6V34H1ZM11 15L52 2V46L44 41L38 43L30 38L22 41L18 36L11 34Z" />
        </svg>
        <Fit w={646} className="mt-[-3px] ml-[60px] text-[44px] leading-none">投中国人工智能产业 就选515980</Fit>
        <div className="mt-[-3px] mr-[5px] ml-[327px] h-[40px] w-px bg-[#d98a60]" />
        <X size={64} strokeWidth={1.5} className="mt-[-4px]" />
      </div>
    </section>
  );
}

function NavItem({ label, w, children }) {
  return (
    <div className="flex w-[237px] flex-col items-center pt-[8px]">
      <svg width="72" height="68" viewBox="-36 -34 72 68" fill="none" stroke="#666" strokeWidth="3.600">{children}</svg>
      <Fit w={w} className="mt-[11px] text-[50px] leading-[58px] text-[#5e605f]">{label}</Fit>
    </div>
  );
}
function BottomNav() {
  return (
    <nav className="flex h-[153px] border-t-2 border-[#d6d9e0] bg-[#f8fbff]">
      <div className="w-[310px]">
        <svg width="24" height="9" viewBox="0 0 24 9" className="mt-[9px] ml-[144px] block"><path d="M0 9H24L12 0Z" fill="#777" /></svg>
        <Fit w={208} className="mt-[6px] ml-[53px] h-[54px] text-[57px] leading-[54px] text-[#0a980a]">3320.90</Fit>
        <div className="flex h-[58px] items-center leading-none">
          <Fit w={104} className="ml-[34px] text-[50px] text-[#5e605f]">上证</Fit>
          <Fit w={138} className="ml-[34px] text-[43px] text-[#0d970d]">-1.98%</Fit>
        </div>
      </div>
      <NavItem label="交易" w={102}>
        <path d="M-17 -25A31 31 0 0 1 31 12L36 7M17 25A31 31 0 0 1 -31 -13L-36 -8M-10 -14L0 -3L10 -14M0 -3V16M-11 -2H11M-11 7H11" />
      </NavItem>
      <NavItem label="发帖" w={102}>
        <path d="M15 -29H-22Q-29 -29 -29 -22V22Q-29 29 -22 29H22Q29 29 29 22V-12" />
        <path d="M22 -20L-6 8" strokeWidth="6.500" /><path d="M24 -24L29 -28" strokeWidth="6" />
      </NavItem>
      <NavItem label="功能" w={102}>
        <rect x="-28" y="-28" width="24" height="25" rx="4" /><rect x="-28" y="4" width="24" height="25" rx="4" /><rect x="3" y="4" width="24" height="25" rx="4" />
        <path d="M15 -29Q17 -29 19 -26L27 -17Q28 -15 27 -13L18 -3Q15 -1 13 -3L3 -13Q1 -15 3 -17L12 -27Z" />
      </NavItem>
      <NavItem label="设自选" w={156}>
        <circle r="30" /><g fill="#666" stroke="none"><circle cx="-13" r="3.200" /><circle r="3.200" /><circle cx="13" r="3.200" /></g>
      </NavItem>
    </nav>
  );
}

export default function App() {
  return (
    <main className="h-[2844px] w-[1260px] overflow-hidden bg-[#fefefe] font-['Noto_Sans_CJK_SC',sans-serif] text-[#262626]">
      <StatusBar />
      <Header />
      <Quote />
      <AfterHours />
      <Notice />
      <Tabs />
      <Charts />
      <AdBar />
      <BottomNav />
      <div className="flex h-[134px] items-center">
        <svg width="54" height="60" viewBox="0 0 54 60" className="ml-[339px]" fill="none" stroke="#d6d3d6" strokeWidth="4.500" strokeLinejoin="round"><path d="M49 5V55L7 31Z" /></svg>
        <svg width="58" height="58" viewBox="0 0 58 58" className="ml-[207px]" fill="none" stroke="#d6d3d6" strokeWidth="4.500"><circle cx="29" cy="29" r="25" /></svg>
        <svg width="54" height="54" viewBox="0 0 54 54" className="ml-[205px]" fill="none" stroke="#d6d3d6" strokeWidth="4.500"><rect x="4" y="4" width="46" height="46" rx="2" /></svg>
      </div>
    </main>
  );
}
